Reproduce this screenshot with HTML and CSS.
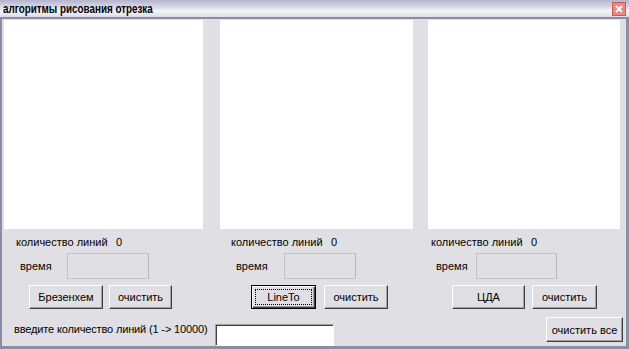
FILE: index.html
```html
<!DOCTYPE html>
<html>
<head>
<meta charset="utf-8">
<link rel="stylesheet" href="styles.css">
</head>
<body>
<div class="window">
  <div class="titlebar">
    <span class="title">алгоритмы рисования отрезка</span>
    <span class="close"><svg width="14" height="14" viewBox="0 0 14 14"><rect x="0.5" y="0.5" width="13" height="13" fill="#e98a7e" stroke="#c85a52"/><path d="M4 4 L10 10 M10 4 L4 10" stroke="#fff" stroke-width="2"/></svg></span>
  </div>
  <div class="content">
    <div class="columns">
      <div class="col col1">
        <div class="canvas"></div>
        <div class="row count"><span class="lbl">количество линий</span><span class="val">0</span></div>
        <div class="row time"><span class="lbl">время</span><span class="tbox"></span></div>
        <div class="row btns"><button class="btn b-main">Брезенхем</button><button class="btn b-clear">очистить</button></div>
      </div>
      <div class="col col2">
        <div class="canvas"></div>
        <div class="row count"><span class="lbl">количество линий</span><span class="val">0</span></div>
        <div class="row time"><span class="lbl">время</span><span class="tbox"></span></div>
        <div class="row btns"><button class="btn b-main focus"><span class="dots">LineTo</span></button><button class="btn b-clear">очистить</button></div>
      </div>
      <div class="col col3">
        <div class="canvas"></div>
        <div class="row count"><span class="lbl">количество линий</span><span class="val">0</span></div>
        <div class="row time"><span class="lbl">время</span><span class="tbox"></span></div>
        <div class="row btns"><button class="btn b-main">ЦДА</button><button class="btn b-clear">очистить</button></div>
      </div>
    </div>
    <div class="bottom">
      <span class="prompt">введите количество линий (1 -&gt; 10000)</span>
      <span class="input"></span>
      <button class="btn b-all">очистить все</button>
    </div>
  </div>
</div>
</body>
</html>
```
FILE: styles.css
```css
* { box-sizing: border-box; }
html, body { margin: 0; padding: 0; }
body { width: 629px; height: 349px; overflow: hidden; background: #e0dfe3; font-family: "Liberation Sans", Arial, sans-serif; font-size: 11px; color: #000; }
.window { width: 629px; height: 349px; border-left: 2px solid #8c8ca4; border-right: 3px solid #8c8ca4; border-bottom: 3px solid #8c8ca4; background: #e0dfe3; display: flex; flex-direction: column; }
.titlebar { height: 21px; margin: 0 -3px 0 -2px; background: linear-gradient(#b4b4cc 0%, #d4d4e2 35%, #f4f4f8 65%, #dcdce8 100%); border-bottom: 2px solid #8c8ca4; display: flex; align-items: center; justify-content: space-between; padding: 0 3px 0 3px; }
.title { font-family: "Liberation Sans", Arial, sans-serif; font-weight: bold; font-size: 12px; color: #000; display: inline-block; transform: scaleX(0.82); transform-origin: left center; white-space: nowrap; }
.close { display: flex; width: 14px; height: 14px; margin-top: 1px; }
.content { flex: 1; display: flex; flex-direction: column; padding: 1px 3px 0 2px; }
.columns { display: flex; }
.col { display: flex; flex-direction: column; }
.col1 { width: 199px; }
.col2 { width: 193px; margin-left: 17px; }
.col3 { width: 192px; margin-left: 15px; }
.canvas { height: 209px; background: #fff; }
.row { display: flex; align-items: center; }
.count { height: 14px; margin-top: 6px; }
.count .lbl { width: 100px; }
.col1 .count { padding-left: 12px; }
.col2 .count { padding-left: 11px; }
.col3 .count { padding-left: 3px; }
.time { margin-top: 4px; height: 26px; }
.tbox { height: 26px; border: 1px solid #c4c3c8; border-right-color: #b8b7bc; background: #e0dfe3; display: block; }
.col1 .time { padding-left: 16px; }
.col1 .time .lbl { width: 47px; }
.col1 .tbox { width: 82px; }
.col2 .time { padding-left: 16px; }
.col2 .time .lbl { width: 48px; }
.col2 .tbox { width: 72px; }
.col3 .time { padding-left: 8px; }
.col3 .time .lbl { width: 40px; }
.col3 .tbox { width: 81px; }
.btns { margin-top: 6px; }
.btn { font: inherit; height: 24px; padding: 0; background: #e0dfe3; color: #000; border: 1px solid; border-color: #fff #404040 #404040 #fff; box-shadow: inset -1px -1px 0 #a0a0a0; }
.col1 .btns { padding-left: 25px; }
.col1 .b-main { width: 74px; }
.col1 .b-clear { width: 63px; margin-left: 6px; }
.col2 .btns { padding-left: 31px; }
.col2 .b-main { width: 65px; }
.col2 .b-clear { width: 64px; margin-left: 8px; }
.col3 .btns { padding-left: 24px; }
.col3 .b-main { width: 73px; }
.col3 .b-clear { width: 65px; margin-left: 7px; }
.focus { border: 1px solid #000; box-shadow: inset 1px 1px 0 #fff, inset -1px -1px 0 #404040, inset -2px -2px 0 #a0a0a0; padding: 3px; }
.dots { display: block; height: 100%; border: 1px dotted #000; line-height: 15px; }
.bottom { display: flex; align-items: flex-start; flex: 1; }
.prompt { flex: none; min-width: 0; width: 201px; margin-left: 10px; margin-top: 14px; white-space: nowrap; letter-spacing: -0.15px; }
.input { flex: none; display: block; width: 119px; height: 22px; margin-top: 15px; background: #fff; border: 1px solid; border-color: #a0a0a0 #fff #fff #a0a0a0; box-shadow: inset 1px 1px 0 #404040; }
.b-all { width: 77px; height: 25px; margin-left: auto; margin-top: 8px; }
```
